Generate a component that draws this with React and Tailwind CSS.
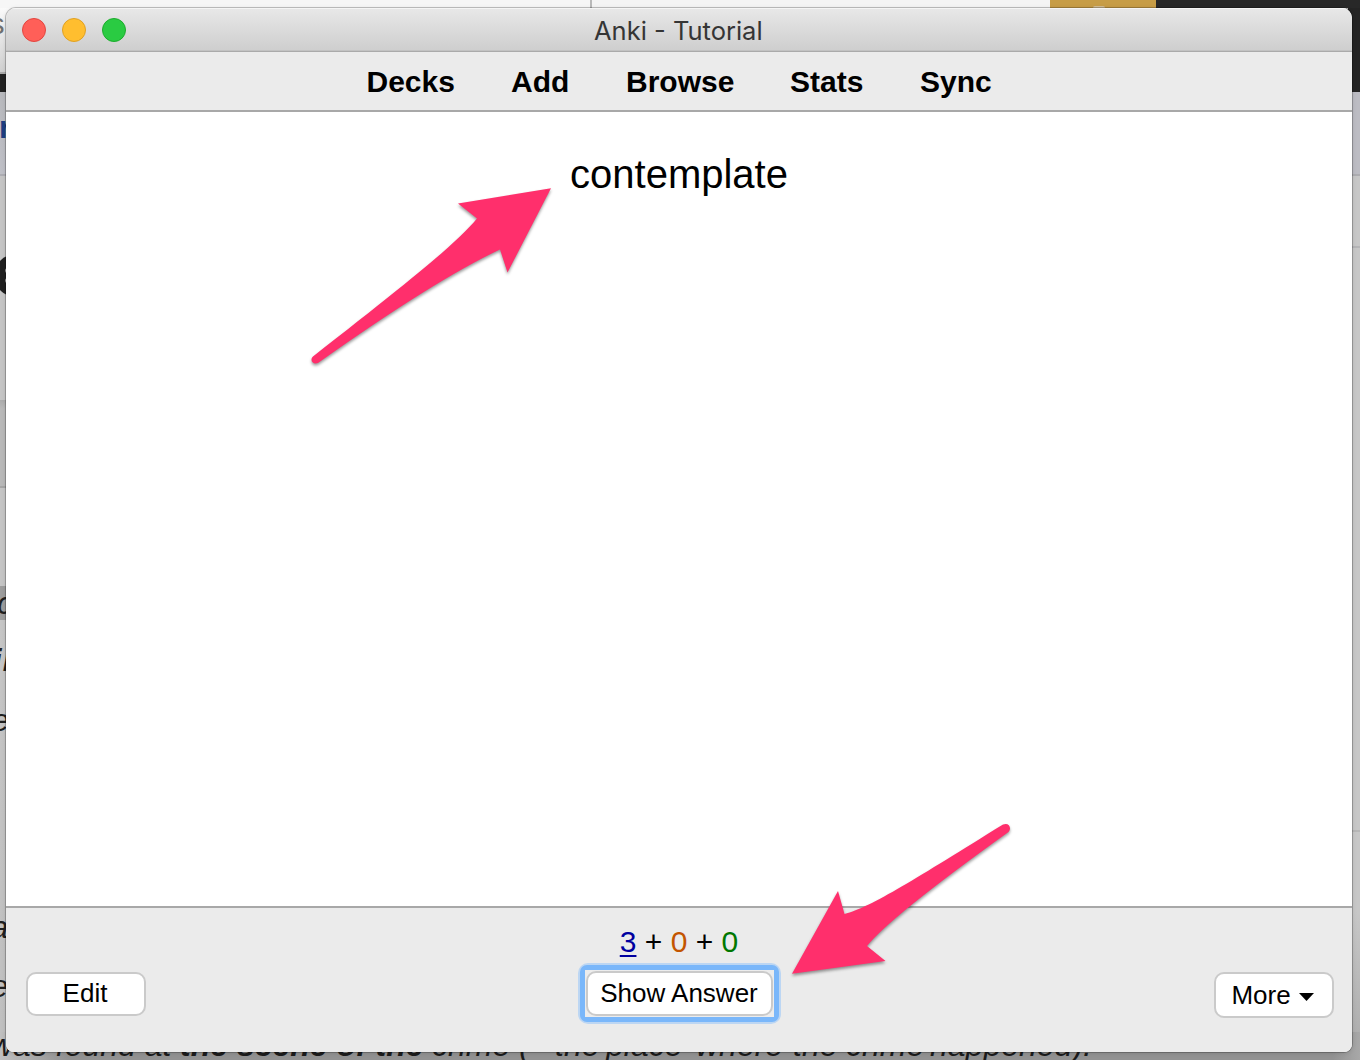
function TopStrip() {
  return (
    <div className="flex h-2 shrink-0">
      <div className="h-2 w-[590px] bg-[#f6f6f6]" />
      <div className="h-2 w-[2px] bg-[#b9b9b9]" />
      <div className="h-2 w-[458px] bg-[#f4f4f4]" />
      <div className="flex h-2 w-[106px] justify-center overflow-hidden bg-[#c79d47] pr-[8px]">
        <div className="mt-[6px] h-[2px] w-3 rounded-t-full bg-[#d3bd94]" />
      </div>
      <div className="h-2 flex-1 bg-[#282828]" />
    </div>
  );
}

function LeftStrip() {
  return (
    <div className="flex w-[20px] flex-col whitespace-nowrap text-[31px] leading-[36px] text-[#202020]">
      <div className="h-[64px] shrink-0 bg-linear-to-b from-[#fafafa] to-[#d0d0d0]">
        <div className="-ml-[10px] text-[29px] leading-[33px] text-[#707070]">s</div>
      </div>
      <div className="h-[2px] shrink-0 bg-[#aaaaaa]" />
      <div className="h-[18px] shrink-0 bg-[#222222]" />
      <div className="h-[82px] shrink-0 bg-linear-to-b from-[#b8b9bd] to-[#bfc0c7]">
        <div className="-ml-[1px] pt-[19px] text-[31px] font-bold leading-[34px] text-[#1e3f83]">r</div>
      </div>
      <div className="h-[2px] shrink-0 bg-[#adadb3]" />
      <div className="h-[224px] shrink-0 bg-[#c5c5c5]">
        <div className="-ml-[4px] pt-[79px]">
          <div className="flex h-[41px] w-[24px] flex-col justify-center gap-[5px] rounded-l-[17px] bg-[#202020] pl-[9px]">
            <div className="h-[5px] w-3 rounded-l bg-[#b6b6b6]" />
            <div className="h-[5px] w-3 rounded-l bg-[#b6b6b6]" />
          </div>
        </div>
      </div>
      <div className="h-[86px] shrink-0 bg-linear-to-b from-[#acacac] via-[#b9b9b9] via-10% to-[#b9b9b9]" />
      <div className="h-[2px] shrink-0 bg-[#a6a6a6]" />
      <div className="h-[98px] shrink-0 bg-[#c5c5c5]" />
      <div className="h-[34px] shrink-0 bg-[#9d9d9d] italic">
        <div className="-ml-[3px] leading-[36px]">c</div>
      </div>
      <div className="h-[412px] shrink-0 bg-linear-to-b from-[#c6c6c6] to-[#c0c0c0] italic">
        <div className="-ml-[7px] h-[60px] pt-[23px] font-bold">i<span className="ml-[1px]">l</span></div>
        <div className="-ml-[8px] h-[207px] pt-[23px]">e</div>
        <div className="-ml-[9px] h-[59px] pt-[23px]">a</div>
        <div className="-ml-[9px] pt-[23px]">e</div>
      </div>
    </div>
  );
}

function RightStrip() {
  return (
    <div className="ml-auto flex w-[12px] flex-col">
      <div className="h-[84px] shrink-0 bg-[#242424]" />
      <div className="h-[82px] shrink-0 bg-[#bcbcc3]" />
      <div className="h-[2px] shrink-0 bg-[#adadb1]" />
      <div className="h-[70px] shrink-0 bg-[#c7c7c7]" />
      <div className="h-[2px] shrink-0 bg-[#b5b5b7]" />
      <div className="h-[582px] shrink-0 bg-[#c7c7c7]" />
      <div className="h-[2px] shrink-0 bg-[#b7b7b7]" />
      <div className="flex-1 bg-linear-to-b from-[#c7c7c7] from-40% to-[#afafaf]" />
    </div>
  );
}

function Desktop() {
  return (
    <div className="absolute inset-0 flex flex-col">
      <TopStrip />
      <div className="flex h-[1024px] shrink-0">
        <LeftStrip />
        <RightStrip />
      </div>
      <div className="flex h-[28px] shrink-0 items-end whitespace-nowrap bg-[linear-gradient(90deg,#c0c0c0,#929292_5%,#929292_98%,#a8a8a8)] text-[32px] italic leading-[30px] text-[#1c1c1c]">
        <div className="-ml-[10px] w-[190px]">was found at</div>
        <div className="w-[252px] font-bold">the scene of the</div>
        <div className="w-[87px]">crime</div>
        <div className="w-[36px]">(=</div>
        <div className="w-[51px]">the</div>
        <div className="w-[90px]">place</div>
        <div className="w-[97px]">where</div>
        <div className="w-[53px]">the</div>
        <div className="w-[84px]">crime</div>
        <div>happened).</div>
      </div>
    </div>
  );
}

function TitleBar() {
  return (
    <header className="flex h-[44px] shrink-0 items-center border-b border-[#aaaaaa] bg-linear-to-b from-[#e8e8e8] to-[#cecece] pl-4 shadow-[inset_0_1px_0_#f5f5f5,inset_0_-1px_0_#c2c2c2]">
      <div className="flex w-[572px] gap-4">
        <span className="h-6 w-6 rounded-full border border-[#e2463f] bg-[#ff5f58]" />
        <span className="h-6 w-6 rounded-full border border-[#dfa023] bg-[#ffbe2f]" />
        <span className="h-6 w-6 rounded-full border border-[#1dac2d] bg-[#2acb42]" />
      </div>
      <h1 className='whitespace-nowrap pt-[2px] font-["Inter",sans-serif] text-[25.5px] leading-8 text-[#353535]'>Anki - Tutorial</h1>
    </header>
  );
}

function Nav() {
  return (
    <nav className="flex h-[60px] shrink-0 items-center border-b-2 border-[#a8a8a8] bg-[#ebebeb] pl-[360.500px] pt-[2px] text-[30px] font-bold leading-9 text-black">
      <a className="w-[144.500px]">Decks</a>
      <a className="w-[115px]">Add</a>
      <a className="w-[164px]">Browse</a>
      <a className="w-[130px]">Stats</a>
      <a>Sync</a>
    </nav>
  );
}

function BottomBar() {
  return (
    <footer className="flex h-[146px] shrink-0 justify-between border-t-2 border-[#a8a8a8] bg-[#ebebeb] px-5 text-[26px] leading-[30px] text-black">
      <button className="mt-[64px] h-[44px] w-[120px] rounded-[10px] border-2 border-[#cacaca] bg-white pb-[3px] pr-[2px]">Edit</button>
      <div className="-ml-[2px] flex flex-col items-center pt-[16px]">
        <div className="whitespace-nowrap text-[30px] leading-9">
          <span className="text-[#0000a0] underline decoration-2 underline-offset-[3px]">3</span> + <span className="text-[#c35500]">0</span> + <span className="text-[#007700]">0</span>
        </div>
        <div className="mt-[3px] rounded-[10px] bg-[#bcd6f3] p-[2px]">
          <div className="rounded-[7px] bg-[#7ab7fa] p-[5px]">
            <div className="bg-[#ececec] p-px">
              <button className="block h-[45px] w-[187px] whitespace-nowrap rounded-[10px] border-2 border-[#cacaca] bg-white pb-[1px]">Show Answer</button>
            </div>
          </div>
        </div>
      </div>
      <button className="-mr-[2px] mt-[64px] flex h-[46px] w-[120px] items-center justify-center gap-2 rounded-[10px] border-2 border-[#cacaca] bg-white pb-px pr-[3px]">
        More
        <svg className="mt-[4px] h-2 w-[15px]" viewBox="0 0 15 8"><path d="M0 0H15L7.5 8Z" fill="#000" /></svg>
      </button>
    </footer>
  );
}

function Arrows() {
  return (
    <svg className="pointer-events-none absolute inset-0 h-[1060px] w-[1360px] drop-shadow-[0_2px_1.5px_rgba(0,0,0,0.4)]" viewBox="0 0 1360 1060" fill="#ff2f6c">
      <path d="M551 188.3L458 203.5L477 218.5C456 244 407 283 313 356.5C309.5 360 312.500 365 318 363Q435 280 500 249.500L507.500 272.500Z" />
      <path d="M792 973.800L838 891L844.500 914C872 907 918 877 1003 824.500C1009 822 1012 828 1008.500 832Q890 917 867 946L885.500 961Z" />
    </svg>
  );
}

export default function App() {
  return (
    <div className='relative h-[1060px] w-[1360px] overflow-hidden bg-[#c5c5c5] font-["Liberation_Sans",sans-serif]'>
      <Desktop />
      <main className="absolute left-[6px] top-2 flex h-[1044px] w-[1346px] flex-col overflow-hidden rounded-[10px] rounded-b-[8px] bg-white shadow-[0_0_0_1px_rgba(0,0,0,0.22),0_1px_5px_rgba(0,0,0,0.14)]">
        <TitleBar />
        <Nav />
        <section className="flex flex-1 justify-center pt-[39px] text-[40px] leading-[46px] text-black">contemplate</section>
        <BottomBar />
      </main>
      <Arrows />
    </div>
  );
}
